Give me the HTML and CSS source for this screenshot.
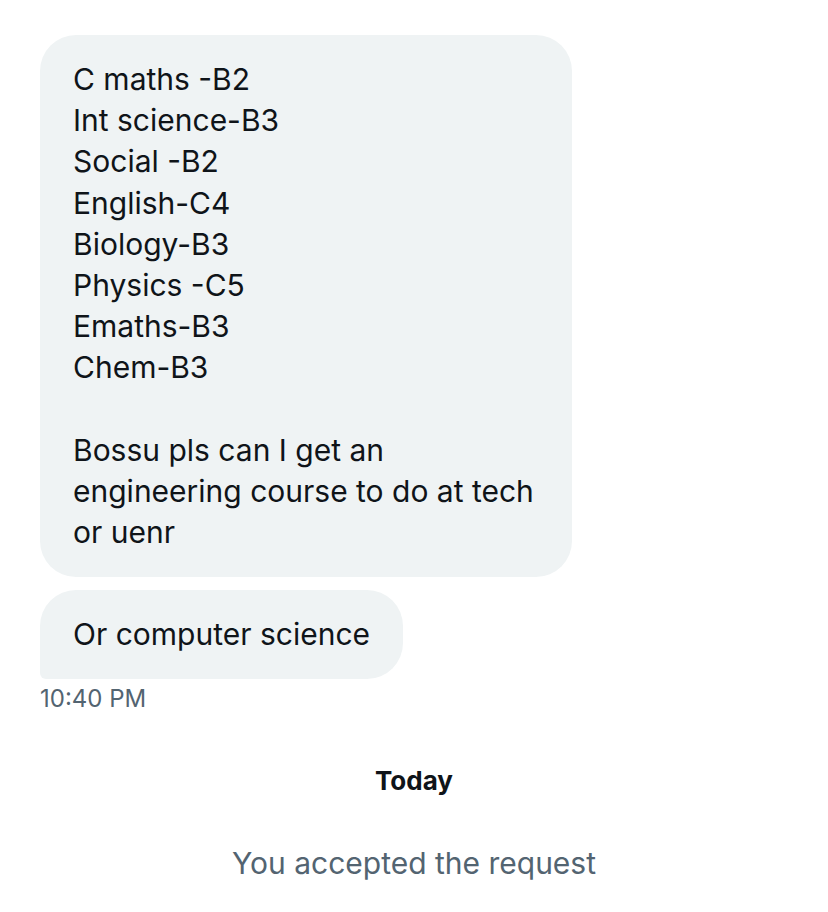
FILE: index.html
```html
<!DOCTYPE html>
<html>
<head>
<meta charset="utf-8">
<link rel="stylesheet" href="styles.css">
</head>
<body>
<div class="chat">
  <div class="bubble bubble-wide">C maths -B2<br>Int science-B3<br>Social -B2<br>English-C4<br>Biology-B3<br>Physics -C5<br>Emaths-B3<br>Chem-B3<br><br>Bossu pls can I get an<br>engineering course to do at tech<br>or uenr</div>
  <div class="bubble bubble-last">Or computer science</div>
  <div class="time">10:40 PM</div>
  <div class="day">Today</div>
  <div class="notice">You accepted the request</div>
</div>
</body>
</html>
```

FILE: styles.css
```css
html, body {
  margin: 0;
  padding: 0;
  background: #ffffff;
}
body {
  width: 828px;
  height: 912px;
  overflow: hidden;
  font-family: Inter, "Liberation Sans", sans-serif;
  color: #0f1419;
}
.chat {
  display: flex;
  flex-direction: column;
  align-items: flex-start;
  padding: 35px 0 0 40px;
}
.bubble {
  background: #eff3f4;
  border-radius: 36px;
  padding: 24px 33px;
  font-size: 30px;
  line-height: 41.2px;
}
.bubble-wide {
  box-sizing: border-box;
  width: 532px;
}
.bubble-last {
  margin-top: 13px;
  padding: 23.5px 33px;
  border-bottom-left-radius: 6px;
}
.time {
  margin-top: 6px;
  font-size: 24px;
  line-height: 28px;
  color: #536471;
}
.day {
  align-self: stretch;
  margin: 52px 40px 0 0;
  text-align: center;
  font-size: 26px;
  font-weight: 700;
  line-height: 32px;
}
.notice {
  align-self: stretch;
  margin: 48px 40px 0 0;
  text-align: center;
  font-size: 30px;
  line-height: 36px;
  color: #536471;
}
```
